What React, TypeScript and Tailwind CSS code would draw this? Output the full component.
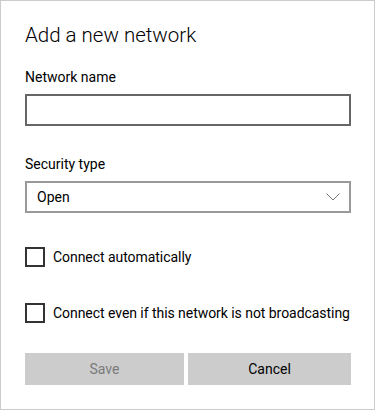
import React from 'react';

const Checkbox: React.FC<{ label: string; className?: string }> = ({ label, className = '' }) => (
  <label className={`flex items-center h-5 ${className}`}>
    <span className="w-5 h-5 border-2 border-[#333333] bg-white flex-shrink-0" />
    <span className="ml-[8px] text-[14px] leading-5 text-black whitespace-nowrap tracking-[-0.05px]">{label}</span>
  </label>
);

const App: React.FC = () => {
  return (
    <div className="w-[375px] h-[410px] border border-[#cccccc] bg-white px-6 pt-5 font-['Roboto',sans-serif] text-black">
      <h1 className="text-[20.5px] leading-7 font-light">Add a new network</h1>

      <div className="mt-[18px] text-[14px] leading-5">Network name</div>
      <input
        type="text"
        className="mt-[7px] block w-[326px] h-8 border-2 border-[#666666] bg-white px-2 text-[14px] outline-none"
      />

      <div className="mt-[28px] text-[14px] leading-5">Security type</div>
      <div className="mt-[7px] w-[326px] h-8 border-2 border-[#999999] bg-white flex items-center justify-between pl-[10px] pr-[9px]">
        <span className="text-[14px] leading-5">Open</span>
        <svg width="14" height="8" viewBox="0 0 14 8" className="block">
          <polyline points="0.5,0.5 7,7 13.5,0.5" fill="none" stroke="#777777" strokeWidth="1" />
        </svg>
      </div>

      <Checkbox label="Connect automatically" className="mt-[34px]" />
      <Checkbox label="Connect even if this network is not broadcasting" className="mt-[36px]" />

      <div className="mt-[30px] flex gap-1 w-[326px]">
        <button className="w-[159px] h-8 bg-[#cccccc] text-[14px] text-[#7a7a7a]">Save</button>
        <button className="flex-1 h-8 bg-[#cccccc] text-[14px] text-black">Cancel</button>
      </div>
    </div>
  );
};

export default App;
